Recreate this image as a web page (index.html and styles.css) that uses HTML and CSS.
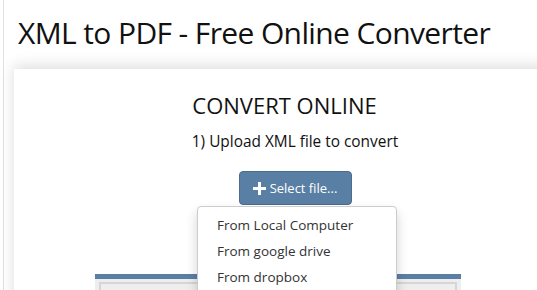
FILE: index.html
```html
<!DOCTYPE html>
<html>
<head>
<meta charset="utf-8">
<link rel="stylesheet" href="styles.css">
</head>
<body>
<div class="page">
  <h1 class="title">XML to PDF - Free Online Converter</h1>
  <div class="card">
    <h2 class="card-title">CONVERT ONLINE</h2>
    <p class="step">1) Upload XML file to convert</p>
    <div class="picker">
      <button class="btn"><span class="plus">
        <svg width="13" height="13" viewBox="0 0 13 13"><path d="M5 0h3v5h5v3H8v5H5V8H0V5h5z" fill="#fff"/></svg>
      </span>Select file...</button>
      <ul class="menu">
        <li>From Local Computer</li>
        <li>From google drive</li>
        <li>From dropbox</li>
      </ul>
    </div>
    <div class="panel">
      <div class="panel-inner"><span class="panel-title">Convert to</span></div>
    </div>
  </div>
</div>
</body>
</html>
```
FILE: styles.css
```css
html, body { margin: 0; padding: 0; overflow: hidden; background: #fff; }
body { font-family: "Open Sans", "DejaVu Sans", sans-serif; color: #111; }
.page {
  margin-left: 3px;
  border-left: 1px solid #e2e2e2;
  padding-left: 10px;
  height: 290px;
}
.title {
  margin: 0;
  padding: 10px 0 0 4px;
  font-size: 30px;
  font-weight: 400;
  line-height: 46px;
  height: 59px;
  letter-spacing: -0.62px;
  white-space: nowrap;
}
.card {
  width: 562px;
  background: #fff;
  box-shadow: 0 -3px 14px rgba(0,0,0,0.14);
  padding-top: 22px;
  text-align: center;
  position: relative;
  min-height: 260px;
}
.card-title {
  margin: 0 0 0 -21px;
  font-size: 22px;
  font-weight: 400;
  line-height: 28px;
}
.step {
  margin: 12px 0 0;
  font-size: 15.4px;
  line-height: 22px;
}
.picker {
  position: relative;
  margin-top: 18px;
  height: 34px;
}
.btn {
  height: 34px;
  width: 113px;
  background: #5a7fa4;
  border: 1px solid #4b6c8e;
  border-radius: 4px;
  color: #fff;
  font-family: inherit;
  font-size: 13px;
  padding: 0;
  display: inline-flex;
  align-items: center;
  justify-content: center;
  gap: 4px;
}
.plus { display: inline-flex; }
.menu {
  position: absolute;
  left: 183px;
  top: 35px;
  width: 198px;
  margin: 0;
  padding: 5px 0;
  list-style: none;
  background: #fff;
  border: 1px solid #ccc;
  border-radius: 4px;
  box-shadow: 0 6px 12px rgba(0,0,0,0.18);
  text-align: left;
  z-index: 2;
}
.menu li {
  padding: 0 19px;
  font-size: 13.5px;
  line-height: 26px;
  color: #333;
}
.panel {
  margin: 69px 0 0 81px;
  width: 358px;
  border-top: 5px solid #5a7fa4;
  background: #eeeeee;
  padding: 3px 4px 0;
  height: 30px;
  text-align: left;
}
.panel-inner {
  border: 2px solid #d6d6d6;
  border-bottom: none;
  height: 28px;
  padding: 2px 0 0 12px;
}
.panel-title { color: #1a2f8a; font-weight: 700; font-size: 15px; }
```
